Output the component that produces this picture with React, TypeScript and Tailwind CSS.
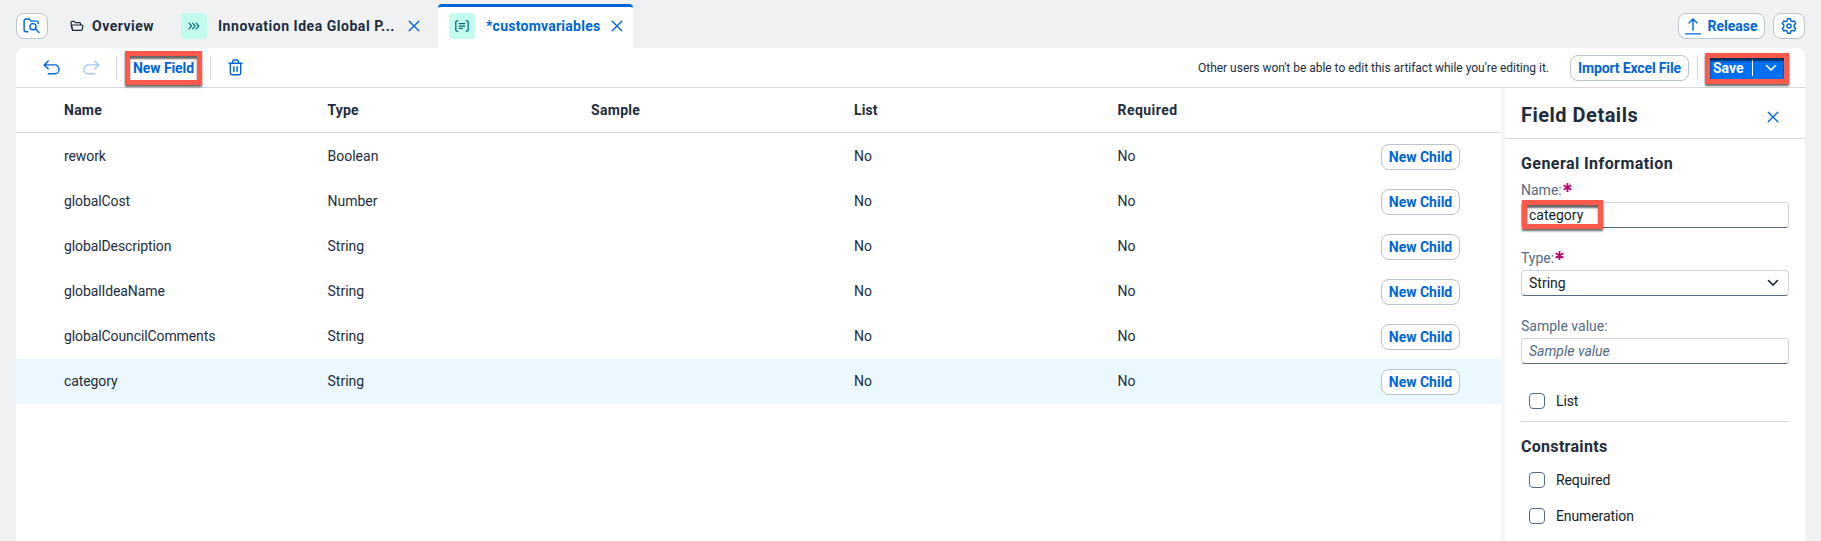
import React from "react";

type IconProps = { className?: string };

function CloseIcon({ className = "" }: IconProps) {
  return (
    <svg width="12" height="12" viewBox="0 0 12 12" fill="none" stroke="currentColor" strokeWidth="1.3" strokeLinecap="round" className={`shrink-0 ${className}`}>
      <path d="M1.2 1.2 10.8 10.8M10.8 1.2 1.2 10.8" />
    </svg>
  );
}

function FolderSearchIcon() {
  return (
    <svg width="18" height="16" viewBox="0 0 18 16" fill="none" stroke="currentColor" strokeWidth="1.4" strokeLinecap="round" strokeLinejoin="round">
      <path d="M4.8 13.7H3A1.9 1.9 0 0 1 1.1 11.8V2.9A1.9 1.9 0 0 1 3 1h2.7c.7 0 1.1.3 1.4.9l.4.8c.2.3.4.4.8.4h5.2a1.8 1.8 0 0 1 1.8 1.8v.6" />
      <circle cx="10" cy="8.7" r="3.1" />
      <path d="m12.4 11 3.6 3.6" />
    </svg>
  );
}

function FolderOpenIcon() {
  return (
    <svg width="14" height="12" viewBox="0 0 14 12" fill="none" stroke="currentColor" strokeWidth="1.2" strokeLinecap="round" strokeLinejoin="round">
      <path d="M2.7 10.4 1 3V2.3a1 1 0 0 1 1-1h2.2l1.1 1.3h4.2a1 1 0 0 1 1 1V5" />
      <path d="M1.9 5h10.2a.8.8 0 0 1 .8 1l-.8 3.6a1 1 0 0 1-1 .8H3.4a1 1 0 0 1-1-.8L1.2 5.8" />
    </svg>
  );
}

function ProcessIcon() {
  return (
    <svg width="12" height="8" viewBox="0 0 12 8" fill="none" stroke="currentColor" strokeWidth="1.2" strokeLinecap="round" strokeLinejoin="round">
      <path d="M1 1.2 3.6 4 1 6.8M4.6 1.2 7.2 4 4.6 6.8M8.2 1.2 10.8 4 8.2 6.8" />
    </svg>
  );
}

function VariablesIcon() {
  return (
    <svg width="14" height="12" viewBox="0 0 14 12" fill="none" stroke="currentColor" strokeWidth="1.25" strokeLinecap="round" strokeLinejoin="round">
      <path d="M2.8.8H1.9a1.1 1.1 0 0 0-1.1 1.1v8.2a1.1 1.1 0 0 0 1.1 1.1h.9M11.2.8h.9a1.1 1.1 0 0 1 1.1 1.1v8.2a1.1 1.1 0 0 1-1.1 1.1h-.9" />
      <path d="M4.2 3.6h5.6M4.2 6h5.6M4.2 8.4h3" />
    </svg>
  );
}

function UndoIcon({ className = "" }: IconProps) {
  return (
    <svg width="17" height="15" viewBox="0 0 17 15" fill="none" stroke="currentColor" strokeWidth="1.4" strokeLinecap="round" strokeLinejoin="round" className={className}>
      <path d="M5.2 1 1.2 4.9l4 3.9M1.4 4.9h10.4a4.2 4.2 0 0 1 4.2 4.2v.7a4 4 0 0 1-4 4H5.2" />
    </svg>
  );
}

function TrashIcon() {
  return (
    <svg width="15" height="17" viewBox="0 0 15 17" fill="none" stroke="currentColor" strokeWidth="1.4" strokeLinecap="round" strokeLinejoin="round">
      <path d="M1 4.2h13M4.6 4V2.3A1.3 1.3 0 0 1 5.9 1h3.2a1.3 1.3 0 0 1 1.3 1.3V4M2.3 4.4v9.7a1.6 1.6 0 0 0 1.6 1.6h7.2a1.6 1.6 0 0 0 1.6-1.6V4.4M5.9 7.6v4.8M9.1 7.6v4.8" />
    </svg>
  );
}

function ReleaseIcon() {
  return (
    <svg width="16" height="17" viewBox="0 0 16 17" fill="none" stroke="currentColor" strokeWidth="1.4" strokeLinecap="round" strokeLinejoin="round">
      <path d="M8 12V1.2M4 5.1l4-4 4 4M.7 15.9h14.600" />
    </svg>
  );
}

function GearIcon() {
  return (
    <svg width="16" height="16" viewBox="0 0 16 16" fill="none" stroke="currentColor" strokeWidth="1.4" strokeLinejoin="round">
      <path d="M6.600.8h2.800l.5 2.100 1.300.8 2.100-.7 1.400 2.500L13.200 7v2l1.500 1.500-1.400 2.500-2.100-.7-1.300.8-.5 2.100H6.600l-.5-2.100-1.300-.8-2.100.7-1.400-2.500L2.800 9V7L1.300 5.500 2.700 3l2.100.7 1.300-.8Z" />
      <circle cx="8" cy="8" r="2" />
    </svg>
  );
}

function ChevronDownIcon() {
  return (
    <svg width="12" height="8" viewBox="0 0 12 8" fill="none" stroke="currentColor" strokeWidth="1.6" strokeLinecap="round" strokeLinejoin="round" className="shrink-0">
      <path d="M1.500 1.500 6 6 10.500 1.500" />
    </svg>
  );
}

/* Red annotation frame laid over a control. */
function Highlight({ className }: { className: string }) {
  return (
    <span
      className={`pointer-events-none absolute border-[5px] border-[#fd5a4b] shadow-[0_2px_2px_rgba(0,0,0,0.6),inset_0_3px_2px_rgba(0,0,0,0.6)] ${className}`}
    />
  );
}

function Separator() {
  return <span className="h-6 w-px bg-[#d9d9d9]" />;
}

const outlineButton =
  "flex h-[26px] items-center justify-center rounded-lg border border-[#bcc3ca] bg-white text-sm font-bold text-[#0064d9]";

const columns = "grid grid-cols-[263.5px_263.5px_263px_263.500px_263.500px_1fr] pl-12";

const rows = [
  { name: "rework", type: "Boolean" },
  { name: "globalCost", type: "Number" },
  { name: "globalDescription", type: "String" },
  { name: "globalIdeaName", type: "String" },
  { name: "globalCouncilComments", type: "String" },
  { name: "category", type: "String", selected: true },
];

function Header() {
  return (
    <header className="flex h-12 items-start px-4 font-bold text-[#1d2d3e]">
      <button className={`${outlineButton} mt-[13px] w-8`}>
        <FolderSearchIcon />
      </button>
      <div className="flex h-[52px] items-center pl-[22px]">
        <FolderOpenIcon />
        <span className="ml-2 w-[89px] text-sm tracking-[0.49px]">Overview</span>
        <span className="flex size-[26px] items-center justify-center rounded bg-[#c2fcee] text-[#046c7a]">
          <ProcessIcon />
        </span>
        <span className="ml-[11px] w-[190px] text-sm tracking-[0.53px]">Innovation Idea Global P...</span>
        <CloseIcon className="text-[#0064d9]" />
      </div>
      <div className="ml-[18px] mt-1 flex h-11 w-[195px] items-center rounded-t-sm border-t-[3px] border-[#0064d9] bg-white pb-[3px] pl-[11px]">
        <span className="flex size-[26px] items-center justify-center rounded bg-[#c2fcee] text-[#046c7a]">
          <VariablesIcon />
        </span>
        <span className="ml-[11px] w-[125px] text-sm tracking-[0.25px] text-[#0064d9]">*customvariables</span>
        <CloseIcon className="text-[#0064d9]" />
      </div>
      <div className="ml-auto mt-[13px] flex gap-2">
        <button className={`${outlineButton} w-[87px] gap-[6px]`}>
          <ReleaseIcon />
          Release
        </button>
        <button className={`${outlineButton} w-8`}>
          <GearIcon />
        </button>
      </div>
    </header>
  );
}

function Toolbar() {
  return (
    <div className="flex h-10 items-center border-b border-[#d9d9d9] pl-[27px] pr-[17px] text-sm font-bold text-[#0064d9]">
      <UndoIcon />
      <UndoIcon className="ml-[23px] -scale-x-100 opacity-35" />
      <span className="ml-4 flex">
        <Separator />
      </span>
      <button className="relative ml-4 h-6 w-[61px] whitespace-nowrap tracking-[-0.08px]">
        New Field
        <Highlight className="-left-2 -top-[5px] h-[34px] w-[77px]" />
      </button>
      <span className="ml-4 flex">
        <Separator />
      </span>
      <span className="ml-[17px]">
        <TrashIcon />
      </span>
      <span className="ml-auto text-xs font-normal tracking-[-0.02px] text-[#1d2d3e]">
        Other users won't be able to edit this artifact while you're editing it.
      </span>
      <button className={`${outlineButton} ml-[21px] mr-2 w-[119px] tracking-[-0.14px]`}>Import Excel File</button>
      <Separator />
      <div className="relative ml-2 flex h-[26px] w-[82px] items-center bg-[#0070f2] bg-clip-content px-1 pl-[3px] text-white">
        <span className="w-[43px] pl-1">Save</span>
        <span className="h-[17px] w-px bg-white" />
        <span className="ml-3">
          <ChevronDownIcon />
        </span>
        <Highlight className="-left-px -top-[2px] h-[31px] w-[84px]" />
      </div>
    </div>
  );
}

function FieldTable() {
  return (
    <div className="w-[1485px] text-sm text-[#1d2d3e]">
      <div className={`${columns} mb-px h-[45px] items-center border-b border-[#d9d9d9] font-bold`}>
        <span className="tracking-[0.25px]">Name</span>
        <span className="tracking-[0.15px]">Type</span>
        <span className="tracking-[0.3px]">Sample</span>
        <span className="tracking-[0.1px]">List</span>
        <span className="tracking-[0.45px]">Required</span>
      </div>
      {rows.map((row) => (
        <div key={row.name} className={`${columns} h-[45px] items-center ${row.selected ? "bg-[#ebf8ff]" : ""}`}>
          <span className="pb-[2px] tracking-[-0.1px]">{row.name}</span>
          <span className="pb-[2px]">{row.type}</span>
          <span />
          <span className="pb-[2px]">No</span>
          <span className="pb-[2px]">No</span>
          <button className={`${outlineButton} mt-px w-[79px]`}>New Child</button>
        </div>
      ))}
    </div>
  );
}

function Label({ text, required = false }: { text: string; required?: boolean }) {
  return (
    <div className="flex h-5 items-center text-[#556b82]">
      {text}
      {required && (
        <svg width="9" height="9" viewBox="0 0 9 9" stroke="#ba066c" strokeWidth="1.8" className="-mt-[6px] ml-px">
          <path d="M4.500 0v9M.6 2.200l7.800 4.600M8.400 2.200.6 6.800" />
        </svg>
      )}
    </div>
  );
}

const field =
  "relative flex h-[26px] items-center rounded border border-[#d0d6dc] border-b-[#556b82] bg-white pl-[7px] pr-[10px] text-[#131e29]";

function Checkbox({ label }: { label: string }) {
  return (
    <label className="flex items-center gap-[11px] pl-2 text-[#131e29]">
      <span className="size-4 rounded border border-[#556b82]" />
      <span className="tracking-[-0.1px]">{label}</span>
    </label>
  );
}

function DetailsPanel() {
  return (
    <aside className="w-[300px] text-sm">
      <div className="flex h-[51px] items-center justify-between border-b border-[#d9d9d9] pl-4 pr-[26px] text-[#1d2d3e]">
        <h2 className="pb-[1px] pt-1 text-xl font-bold tracking-[0.5px]">Field Details</h2>
        <CloseIcon className="mt-[7px] text-[#0064d9]" />
      </div>
      <div className="flex flex-col px-4 pt-[13px]">
        <h3 className="text-base font-bold tracking-[0.43px] text-[#1d2d3e]">General Information</h3>
        <div className="mt-1">
          <Label text="Name:" required />
          <div className={`${field} mt-[2px]`}>
            category
            <Highlight className="left-0 -top-[3px] h-[29px] w-[81px]" />
          </div>
        </div>
        <div className="mt-5">
          <Label text="Type:" required />
          <div className={`${field} mt-[2px] justify-between !pr-[9px]`}>
            String
            <ChevronDownIcon />
          </div>
        </div>
        <div className="mt-5">
          <Label text="Sample value:" />
          <div className={`${field} mt-[2px] italic !text-[#556b82]`}>Sample value</div>
        </div>
        <div className="mt-[27px] h-[31px] border-b border-[#d9d9d9]">
          <Checkbox label="List" />
        </div>
        <h3 className="mb-[11px] mt-[13px] text-base font-bold tracking-[0.3px] text-[#1d2d3e]">Constraints</h3>
        <div className="flex flex-col gap-4">
          <Checkbox label="Required" />
          <Checkbox label="Enumeration" />
        </div>
      </div>
    </aside>
  );
}

export default function App() {
  return (
    <div className="h-[541px] w-[1821px] overflow-hidden bg-[#eff1f3] font-['Roboto',sans-serif]">
      <Header />
      <main className="mx-4 flex h-[493px] flex-col rounded-t-lg bg-white">
        <Toolbar />
        <div className="flex flex-1">
          <FieldTable />
          <div className="w-1 bg-[#f5f6f7]" />
          <DetailsPanel />
        </div>
      </main>
    </div>
  );
}
